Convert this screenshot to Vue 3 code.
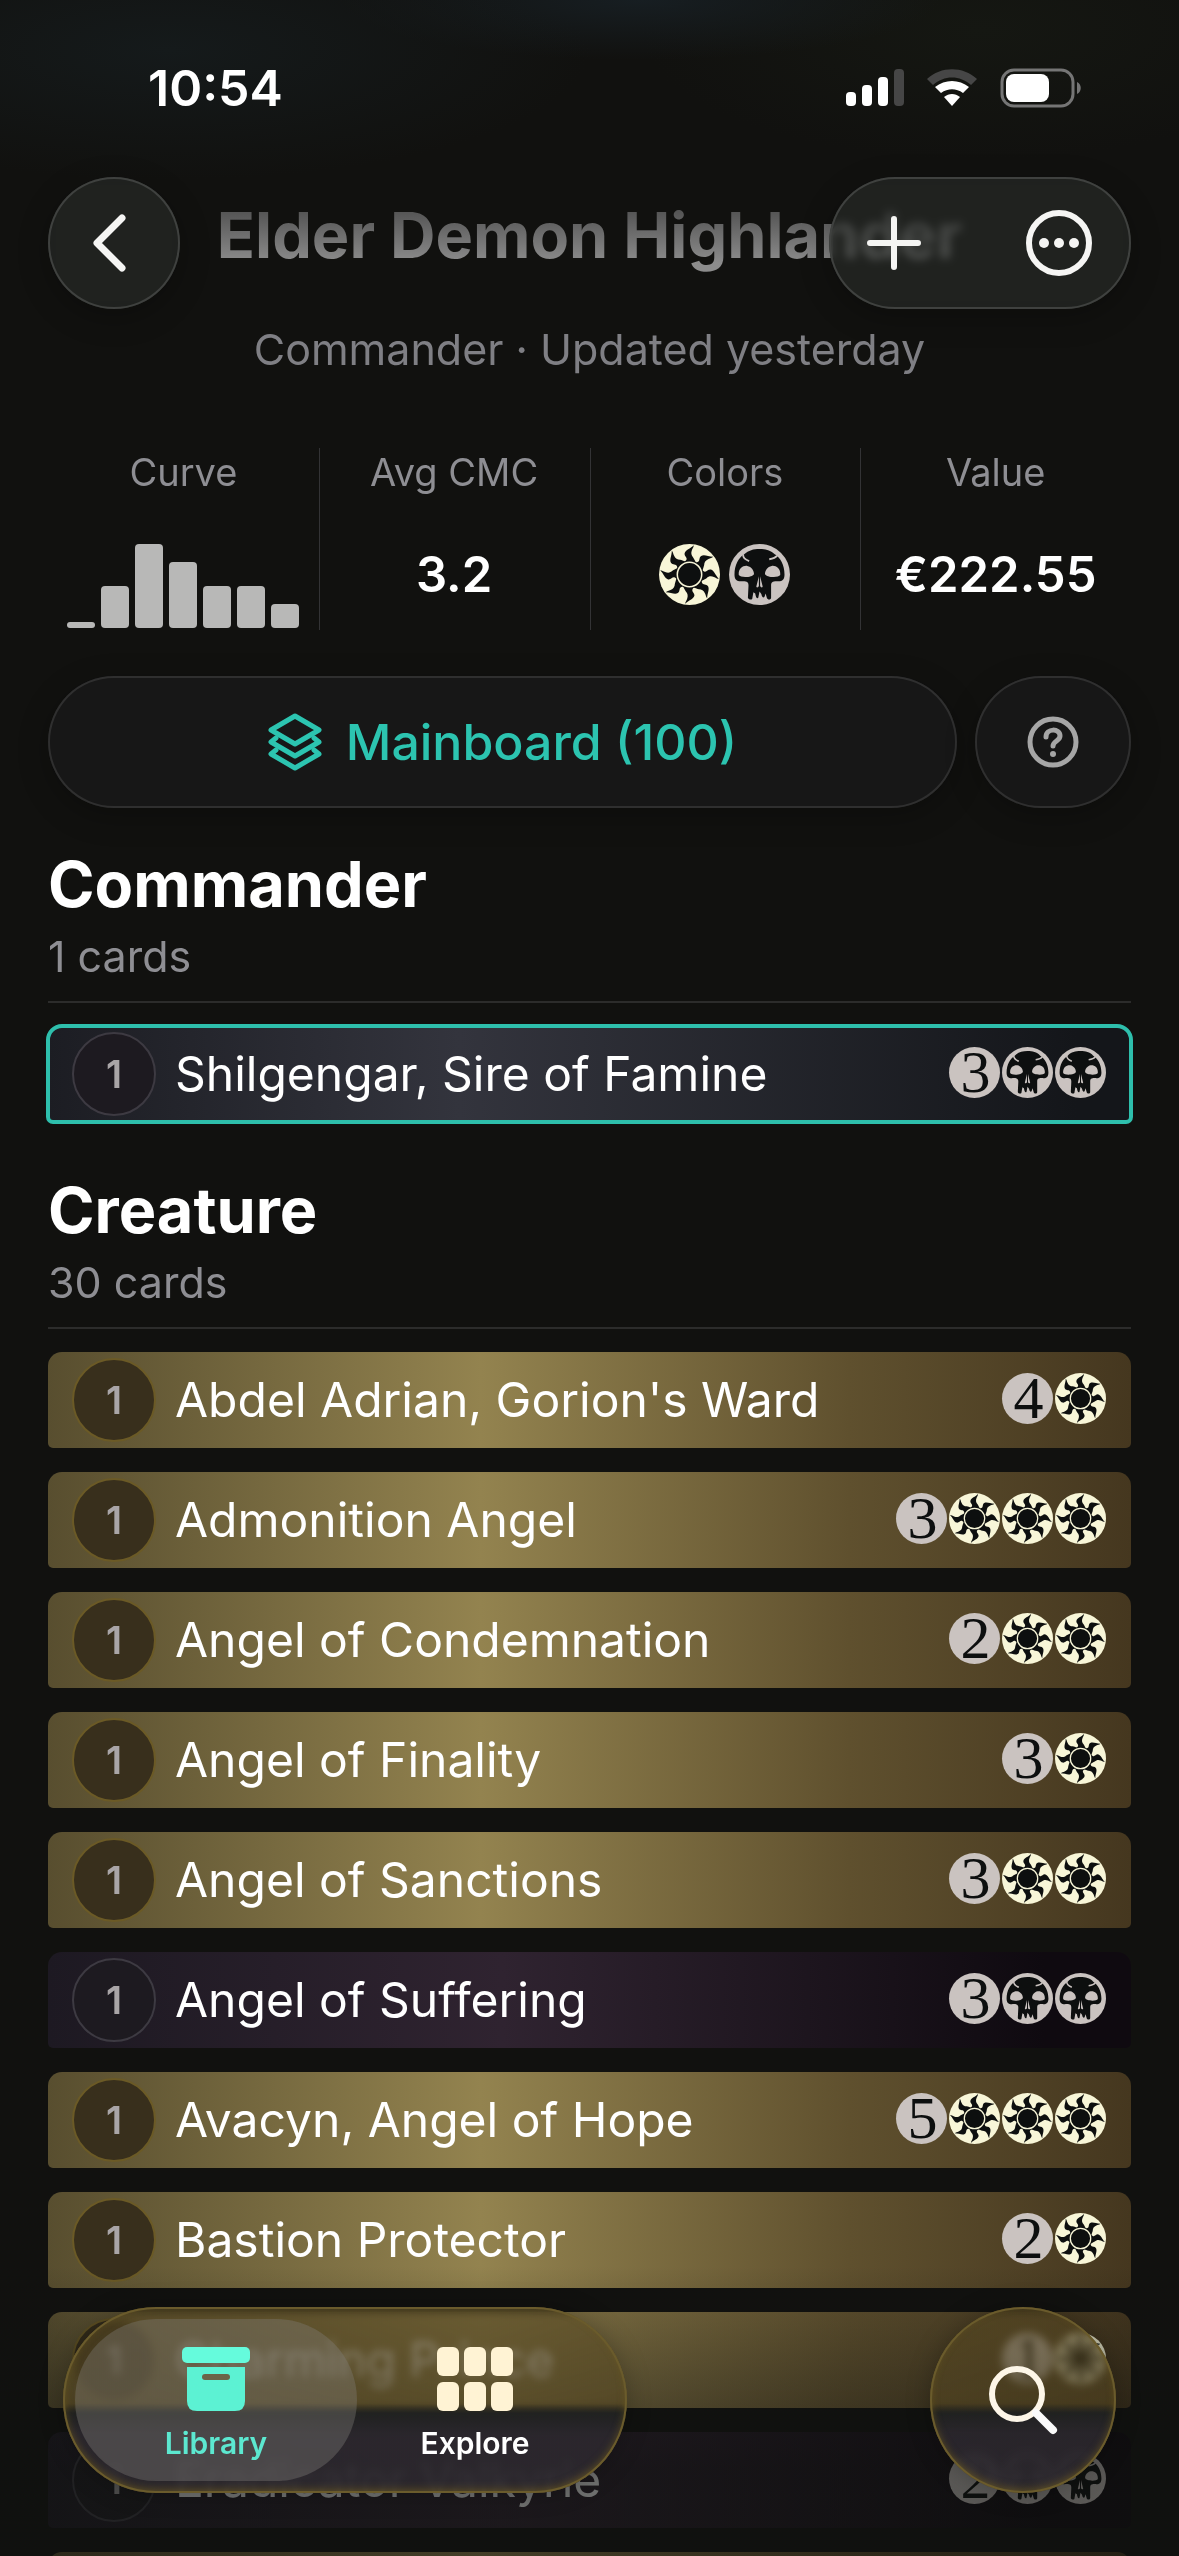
<script setup>
const curve = [6, 42, 84, 66, 42, 42, 24]
const flames = [0, 45, 90, 135, 180, 225, 270, 315]

const sections = [
  {
    title: 'Commander',
    count: 1,
    cards: [{ name: 'Shilgengar, Sire of Famine', cost: '3BB', tone: 'slate', lead: true }],
  },
  {
    title: 'Creature',
    count: 30,
    cards: [
      { name: "Abdel Adrian, Gorion's Ward", cost: '4W', tone: 'gold' },
      { name: 'Admonition Angel', cost: '3WWW', tone: 'gold' },
      { name: 'Angel of Condemnation', cost: '2WW', tone: 'gold' },
      { name: 'Angel of Finality', cost: '3W', tone: 'gold' },
      { name: 'Angel of Sanctions', cost: '3WW', tone: 'gold' },
      { name: 'Angel of Suffering', cost: '3BB', tone: 'plum' },
      { name: 'Avacyn, Angel of Hope', cost: '5WWW', tone: 'gold' },
      { name: 'Bastion Protector', cost: '2W', tone: 'gold' },
      { name: 'Charming Prince', cost: '1W', tone: 'gold' },
      { name: 'Eradicator Valkyrie', cost: '2BB', tone: 'plum' },
      { name: '', cost: '', tone: 'gold' },
    ],
  },
]
</script>

<template>
  <div class="screen">
    <svg class="defs" aria-hidden="true">
      <symbol id="mana-W" viewBox="0 0 100 100">
        <circle cx="50" cy="50" r="50" fill="#f8f6d8" />
        <g fill="#0d0f0f">
          <path
            v-for="a in flames"
            :key="a"
            :transform="`rotate(${a} 50 50)`"
            d="M57 2 C51 8 44 9 42 15 C41 20 47 22 45 26 C44 28 42 29 40 32 L61 31 C58 26 58 25 56 22 C53 19 52 15 54 10 C55 7 57 5 57 2Z"
          />
        </g>
        <circle cx="50" cy="50" r="20" fill="#0d0f0f" stroke="#f8f6d8" stroke-width="2.5" />
      </symbol>
      <symbol id="mana-B" viewBox="0 0 100 100">
        <circle cx="50" cy="50" r="50" fill="#cac3c0" />
        <path
          fill="#0d0f0f"
          d="M25 17 C32 10 40 8 50 8 C60 8 68 10 75 17 C84 22 91 35 91 50 C91 60 86 62 78 61 C71 61 69 63 69 68 L69 88 C69 92 63 92 62 88 L60 81 L58 87 C56 89 54 87 53 82 L50 78 L48 88 C46 90 44 88 43 81 L40 79 L38 90 C36 92 32 91 31 88 L32 68 C32 63 30 61 23 61 C14 62 9 60 9 50 C9 35 16 22 25 17Z"
        />
        <g fill="#cac3c0">
          <path d="M16 51 C15 39 24 35 30 36 C37 37 41 44 41 49 C39 55 19 56 16 51Z" />
          <path d="M84 51 C85 39 76 35 70 36 C63 37 59 44 59 49 C61 55 81 56 84 51Z" />
          <path d="M49 53 L45 69 C44 72 48 72 49 69Z" />
          <path d="M51 53 L55 69 C56 72 52 72 51 69Z" />
        </g>
        <path
          d="M23 17 C23 23 26 25 33 28 M79 19 C76 23 72 24 66 25"
          fill="none"
          stroke="#cac3c0"
          stroke-width="3"
        />
      </symbol>
    </svg>

    <header class="status">
      <span class="time">10:54</span>
      <span class="indicators">
        <svg width="58" height="38" viewBox="0 0 58 38" aria-label="Signal">
          <rect x="0" y="23" width="10" height="14" rx="4" fill="#fff" />
          <rect x="16" y="16" width="10" height="21" rx="4" fill="#fff" />
          <rect x="32" y="8" width="10" height="29" rx="4" fill="#fff" />
          <rect x="48" y="0" width="10" height="37" rx="4" fill="#464646" />
        </svg>
        <svg width="52" height="38" viewBox="0 0 52 38" aria-label="Wi-Fi">
          <path d="M1 10 C15 -3 37 -3 51 10 L45 16 C34 6 18 6 7 16Z" fill="#464646" />
          <path d="M9 18 C19 10 33 10 43 18 L37 24 C30 19 22 19 15 24Z" fill="#fff" />
          <path d="M18 28 C23 24 29 24 34 28 L26 37Z" fill="#fff" />
        </svg>
        <svg width="83" height="40" viewBox="0 0 83 40" aria-label="Battery">
          <rect x="2" y="2" width="71" height="36" rx="12" fill="none" stroke="#757575" stroke-width="3" />
          <rect x="6" y="6" width="43" height="28" rx="8" fill="#fff" />
          <path d="M77 14 C82 16 82 24 77 26Z" fill="#757575" />
        </svg>
      </span>
    </header>

    <nav class="toolbar">
      <button class="glass round" aria-label="Back">
        <svg width="36" height="58" viewBox="0 0 36 58">
          <path d="M31 4 L6 29 L31 54" fill="none" stroke="#f5f5f3" stroke-width="7" stroke-linecap="round" stroke-linejoin="round" />
        </svg>
      </button>
      <div class="glass actions">
        <button aria-label="Add card">
          <svg width="54" height="54" viewBox="0 0 54 54">
            <path d="M27 3 V51 M3 27 H51" stroke="#f5f5f3" stroke-width="6" stroke-linecap="round" />
          </svg>
        </button>
        <button aria-label="More">
          <svg width="66" height="66" viewBox="0 0 66 66">
            <circle cx="33" cy="33" r="30" fill="none" stroke="#f5f5f3" stroke-width="6" />
            <g fill="#f5f5f3">
              <circle cx="18" cy="33" r="5" />
              <circle cx="33" cy="33" r="5" />
              <circle cx="48" cy="33" r="5" />
            </g>
          </svg>
        </button>
      </div>
    </nav>

    <main>
      <div class="heading">
        <h1>Elder Demon Highlander</h1>
        <p>Commander · Updated yesterday</p>
      </div>

      <dl class="stats">
        <div class="stat">
          <dt>Curve</dt>
          <dd class="bars">
            <i v-for="(h, i) in curve" :key="i" :style="{ height: h + 'px' }"></i>
          </dd>
        </div>
        <div class="stat">
          <dt>Avg CMC</dt>
          <dd>3.2</dd>
        </div>
        <div class="stat">
          <dt>Colors</dt>
          <dd class="colors">
            <svg class="big" aria-label="White"><use href="#mana-W" /></svg>
            <svg class="big" aria-label="Black"><use href="#mana-B" /></svg>
          </dd>
        </div>
        <div class="stat">
          <dt>Value</dt>
          <dd>€222.55</dd>
        </div>
      </dl>

      <div class="boards">
        <button class="pill board">
          <svg width="54" height="58" viewBox="0 0 54 58">
            <g fill="none" stroke="#2cc4b0" stroke-width="5" stroke-linejoin="round" stroke-linecap="round">
              <path d="M27 3 L51 17 L27 31 L3 17Z" />
              <path d="M8 25 L3 29 L27 43 L51 29 L46 25" />
              <path d="M8 37 L3 41 L27 55 L51 41 L46 37" />
            </g>
          </svg>
          Mainboard (100)
        </button>
        <button class="pill help" aria-label="Help">
          <svg width="52" height="52" viewBox="0 0 52 52">
            <g fill="none" stroke="#a6a6a6" stroke-width="5">
              <circle cx="26" cy="26" r="23" />
              <path d="M19 21 C19 12 33 12 33 20 C33 25 26 25 26 30" stroke-linecap="round" />
            </g>
            <circle cx="26" cy="38" r="3" fill="#a6a6a6" />
          </svg>
        </button>
      </div>

      <section v-for="s in sections" :key="s.title" class="group">
        <div class="group-head">
          <h2>{{ s.title }}</h2>
          <p>{{ s.count }} cards</p>
        </div>
        <ul>
          <li v-for="(c, i) in s.cards" :key="i" class="card" :class="[c.tone, { lead: c.lead }]">
            <span v-if="c.name" class="qty">1</span>
            <span class="name">{{ c.name }}</span>
            <span class="cost">
              <template v-for="(m, j) in c.cost" :key="j">
                <svg v-if="m === 'W' || m === 'B'" class="mana"><use :href="'#mana-' + m" /></svg>
                <span v-else class="mana generic">{{ m }}</span>
              </template>
            </span>
          </li>
        </ul>
      </section>
    </main>

    <div class="fade"></div>

    <nav class="dock">
      <div class="tabs lens">
        <button class="tab active">
          <svg width="68" height="64" viewBox="0 0 68 64">
            <rect x="0" y="0" width="68" height="16" rx="5" fill="#65fbdc" />
            <path d="M5 20 H63 V54 Q63 64 53 64 H15 Q5 64 5 54Z" fill="#5cf2d3" />
            <rect x="20" y="27" width="28" height="6" rx="3" fill="#6b6448" />
          </svg>
          Library
        </button>
        <button class="tab">
          <svg width="76" height="64" viewBox="0 0 76 64">
            <g fill="#fff3d4">
              <rect x="0" y="0" width="22" height="29" rx="6" />
              <rect x="27" y="0" width="22" height="29" rx="6" />
              <rect x="54" y="0" width="22" height="29" rx="6" />
              <rect x="0" y="35" width="22" height="29" rx="6" />
              <rect x="27" y="35" width="22" height="29" rx="6" />
              <rect x="54" y="35" width="22" height="29" rx="6" />
            </g>
          </svg>
          Explore
        </button>
      </div>
      <button class="lens search" aria-label="Search">
        <svg width="70" height="70" viewBox="0 0 70 70">
          <circle cx="29" cy="29" r="25" fill="none" stroke="#fdf6e8" stroke-width="6" />
          <path d="M48 48 L65 65" stroke="#fafafa" stroke-width="8" stroke-linecap="round" />
        </svg>
      </button>
    </nav>
  </div>
</template>

<style>
body {
  margin: 0;
  background: #11110f;
}
</style>

<style scoped>
.screen {
  position: relative;
  height: 100vh;
  overflow: hidden;
  box-sizing: border-box;
  padding: 0 48px;
  color: #fff;
  font-family: Inter, "Liberation Sans", sans-serif;
  background:
    radial-gradient(ellipse 420px 130px at 170px 50px, #151a1b, transparent),
    radial-gradient(ellipse 300px 60px at 640px 0, #171e22, transparent),
    radial-gradient(ellipse 340px 130px at 980px 30px, #151712, transparent),
    #11110f;
}
.defs {
  position: absolute;
  width: 0;
  height: 0;
}
h1, h2, p, ul, dl, dd {
  margin: 0;
  padding: 0;
}
button {
  margin: 0;
  padding: 0;
  border: 0;
  background: none;
  color: inherit;
  font: inherit;
  display: flex;
  align-items: center;
  justify-content: center;
}
svg {
  display: block;
  flex: none;
}

.status {
  height: 177px;
  box-sizing: border-box;
  padding: 58px 48px 0 100px;
  display: flex;
  align-items: flex-start;
  justify-content: space-between;
}
.time {
  font-size: 50px;
  line-height: 60px;
  font-weight: 600;
}
.indicators {
  display: flex;
  align-items: center;
  gap: 22px;
  padding-top: 10px;
}

.toolbar {
  position: absolute;
  z-index: 2;
  top: 177px;
  left: 48px;
  right: 48px;
  display: flex;
  justify-content: space-between;
}
.glass {
  height: 132px;
  border-radius: 66px;
  background: rgba(35, 38, 35, 0.7);
  backdrop-filter: blur(5px) brightness(1.4);
  box-shadow: inset 0 0 0 2px #3f413f, 0 8px 30px rgba(0, 0, 0, 0.25);
}
.round {
  width: 132px;
}
.round svg {
  margin-right: 10px;
}
.actions {
  width: 302px;
  box-sizing: border-box;
  padding: 0 39px 0 38px;
  display: flex;
  align-items: center;
  justify-content: space-between;
}

.heading {
  padding-top: 18px;
  text-align: center;
  white-space: nowrap;
}
h1 {
  font-size: 63px;
  line-height: 80px;
  font-weight: 700;
  background: linear-gradient(#505050 15%, #8c8c8c 85%);
  -webkit-background-clip: text;
  background-clip: text;
  color: transparent;
}
.heading p {
  margin-top: 46px;
  font-size: 43px;
  line-height: 56px;
  color: #7f7f84;
}

.stats {
  margin-top: 71px;
  display: grid;
  grid-template-columns: repeat(4, 1fr);
}
.stat {
  height: 182px;
  display: flex;
  flex-direction: column;
  align-items: center;
}
.stat + .stat {
  box-shadow: inset 1px 0 #333335;
}
dt {
  font-size: 38px;
  line-height: 48px;
  color: #8e8e93;
}
dd {
  flex: 1;
  padding-top: 22px;
  display: flex;
  align-items: center;
  font-size: 49px;
  font-weight: 600;
}
.bars {
  padding-bottom: 2px;
  align-items: flex-end;
  gap: 6px;
}
.bars i {
  width: 28px;
  border-radius: 4px;
  background: #b8b8b7;
}
.colors {
  gap: 9px;
}
.big {
  width: 61px;
  height: 61px;
}

.boards {
  margin-top: 46px;
  display: flex;
  gap: 18px;
}
.pill {
  height: 132px;
  border-radius: 66px;
  background: #171717;
  box-shadow: inset 0 0 0 2px #2f2f2f, 0 8px 30px rgba(0, 0, 0, 0.25);
}
.board {
  flex: 1;
  gap: 24px;
  color: #2cc4b0;
  font-size: 50px;
  font-weight: 500;
}
.help {
  width: 156px;
}

.group {
  margin-top: 48px;
}
.boards + .group {
  margin-top: 36px;
}
.group-head {
  padding-bottom: 17px;
  border-bottom: 2px solid #2c2c2b;
}
h2 {
  font-size: 63px;
  line-height: 80px;
  font-weight: 700;
}
.group-head p {
  margin-top: 4px;
  font-size: 43px;
  line-height: 56px;
  color: #8e8e93;
}
ul {
  margin-top: 23px;
  list-style: none;
  display: flex;
  flex-direction: column;
  gap: 24px;
}
.card {
  height: 96px;
  box-sizing: border-box;
  padding: 0 25px 0 24px;
  border-radius: 14px 14px 5px 5px;
  display: flex;
  align-items: center;
}
.gold {
  background: linear-gradient(90deg, #584e2f, #93834f 40%, #5f502e 74%, #45371f);
}
.plum {
  background: linear-gradient(90deg, #1d1922, #2f2330 42%, #0f0a10 92%);
}
.slate {
  background: linear-gradient(90deg, #1c1d23, #33343d 38%, #14161a 95%);
}
.lead {
  outline: 4px solid #2ebfac;
  outline-offset: -2px;
}
.qty {
  width: 84px;
  height: 84px;
  border-radius: 50%;
  box-sizing: border-box;
  border: 2px solid #3d3a42;
  background: #1d1a20;
  display: flex;
  align-items: center;
  justify-content: center;
  color: #a9a5a7;
  font-size: 38px;
  font-weight: 600;
}
.gold .qty {
  border-color: #6b5a26;
  background: #382f1c;
}
.name {
  flex: 1;
  padding-left: 19px;
  font-size: 48px;
  line-height: 60px;
  white-space: nowrap;
}
.cost {
  display: flex;
  gap: 2px;
  padding-bottom: 4px;
}
.mana {
  width: 51px;
  height: 51px;
}
.generic {
  box-sizing: border-box;
  padding-left: 2px;
  border-radius: 50%;
  background: #cac3c0;
  color: #0d0f0f;
  text-align: center;
  font-family: "Liberation Serif", serif;
  font-size: 60px;
  line-height: 51px;
}

.fade {
  position: absolute;
  left: 0;
  right: 0;
  bottom: 0;
  height: 290px;
  pointer-events: none;
  background: linear-gradient(transparent, rgba(15, 17, 15, 0.6) 70%);
}
.dock {
  position: absolute;
  z-index: 2;
  left: 63px;
  right: 63px;
  bottom: 63px;
  display: flex;
  justify-content: space-between;
}
.lens {
  height: 186px;
  border-radius: 93px;
  background: linear-gradient(rgba(82, 68, 32, 0.6) 52%, rgba(35, 36, 35, 0.85) 57%, rgba(44, 40, 46, 0.9) 68%);
  backdrop-filter: blur(4px) brightness(1.1);
  box-shadow: inset 0 0 0 2px #6a5b2c, inset 0 -3px 8px rgba(120, 98, 32, 0.7), 0 0 24px rgba(0, 0, 0, 0.25);
}
.tabs {
  width: 564px;
  box-sizing: border-box;
  padding: 12px;
  display: flex;
}
.tab {
  width: 236px;
  flex-direction: column;
  justify-content: flex-start;
  padding-top: 28px;
  gap: 14px;
  border-radius: 81px;
  font-size: 30px;
  line-height: 36px;
  font-weight: 600;
}
.tab.active {
  width: 282px;
  color: #5ce8d0;
  background: rgba(130, 126, 120, 0.38);
}
.search {
  width: 186px;
}
</style>
